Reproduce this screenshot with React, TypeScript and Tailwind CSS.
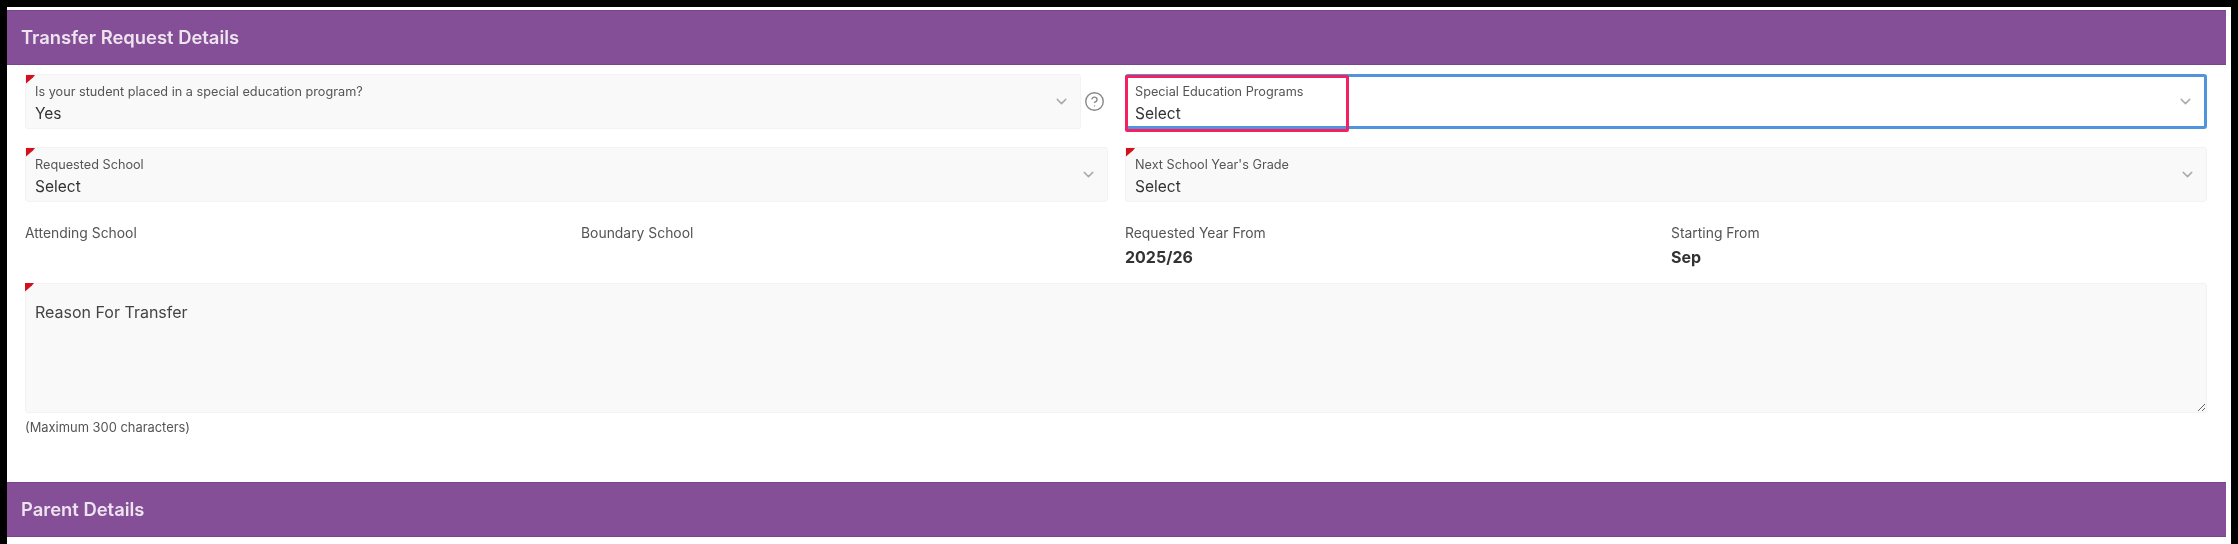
import { ChevronDown, CircleHelp } from "lucide-react";

function Required() {
  return (
    <svg className="absolute left-0 top-0" width="9" height="9" viewBox="0 0 9 9">
      <polygon points="0,0 9,0 7,2.5 0,8.5" fill="#d3101c" />
    </svg>
  );
}

function Field({
  label,
  value,
  required = false,
  active = false,
  className = "",
}: {
  label: string;
  value: string;
  required?: boolean;
  active?: boolean;
  className?: string;
}) {
  return (
    <div
      className={
        "relative flex h-[55px] items-center justify-between rounded-[3px] pr-[10px] " +
        (active ? "border-[3px] border-[#4f94dc] bg-white pl-[7px] " : "border border-[#f3f3f3] bg-[#f9f9f9] pl-[9px] ") +
        className
      }
    >
      {required && <Required />}
      <div className="flex flex-col pt-[5px]">
        <span className="text-[12.7px] leading-[14px] text-[#555]">{label}</span>
        <span className="mt-[5px] text-[15.5px] leading-[20px] text-[#333]">{value}</span>
      </div>
      <ChevronDown size={17} strokeWidth={2} className="text-[#aaa]" />
    </div>
  );
}

function Header({ title }: { title: string }) {
  return (
    <div className="flex h-[55px] w-[2219px] shrink-0 items-center border-y border-[#7a4390] bg-[#844f97] pl-[14px] text-[18.4px] font-semibold text-[#eee4f0]">
      {title}
    </div>
  );
}

function Info({ label, value }: { label: string; value?: string }) {
  return (
    <div className="flex flex-col">
      <span className="text-[13.9px] leading-[18px] text-[#555]">{label}</span>
      {value && <span className="mt-[6px] text-[16px] font-bold leading-[18px] text-[#333]">{value}</span>}
    </div>
  );
}

export default function App() {
  return (
    <div className="h-[544px] w-[2238px] overflow-hidden bg-black pl-[7px] pr-[7px] pt-[7px] font-['Inter',sans-serif]">
      <div className="flex h-[537px] flex-col bg-white pt-[3px] blur-[0.7px]">
        <Header title="Transfer Request Details" />
        <div className="pl-[18px] pr-[24px]">
          <div className="mt-[9px] grid grid-cols-[1083px_1082px] gap-x-[17px] gap-y-[18px]">
            <div className="flex items-center">
              <Field
                required
                label="Is your student placed in a special education program?"
                value="Yes"
                className="w-[1056px]"
              />
              <CircleHelp size={21} strokeWidth={1.6} className="ml-[3px] text-[#888]" />
            </div>
            <div className="relative">
              <Field active label="Special Education Programs" value="Select" />
              <div className="absolute left-0 top-[1px] h-[57px] w-[224px] rounded-[2px] border-[3.5px] border-[#f5205f]" />
            </div>
            <Field required label="Requested School" value="Select" />
            <Field required label="Next School Year's Grade" value="Select" />
          </div>
          <div className="mt-[22px] grid grid-cols-[556px_544px_546px_1fr]">
            <Info label="Attending School" />
            <Info label="Boundary School" />
            <Info label="Requested Year From" value="2025/26" />
            <Info label="Starting From" value="Sep" />
          </div>
          <div className="relative mt-[17px] h-[130px]">
            <Required />
            <textarea
              placeholder="Reason For Transfer"
              className="block h-full w-full rounded-[3px] border border-[#f3f3f3] bg-[#f9f9f9] px-[9px] pt-[18px] text-[16px] leading-[20px] outline-none placeholder:text-[#444]"
            />
          </div>
          <div className="mt-[8px] text-[12.9px] leading-[14px] text-[#555]">(Maximum 300 characters)</div>
        </div>
        <div className="mt-[47px]">
          <Header title="Parent Details" />
        </div>
      </div>
    </div>
  );
}
